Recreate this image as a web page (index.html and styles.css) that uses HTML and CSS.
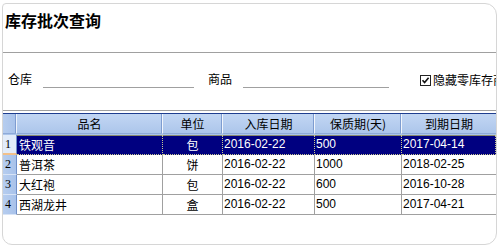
FILE: index.html
```html
<!DOCTYPE html>
<html lang="zh">
<head>
<meta charset="utf-8">
<title>库存批次查询</title>
<link rel="stylesheet" href="styles.css">
</head>
<body>
<div class="panel">
  <div class="title-bar"><h1 class="title">库存批次查询</h1></div>
  <div class="filters">
    <span class="label">仓库</span>
    <span class="field field-wh"></span>
    <span class="label label-goods">商品</span>
    <span class="field field-goods"></span>
    <label class="check">
      <svg class="check-box" width="11" height="11" viewBox="0 0 11 11"><rect x="0.5" y="0.5" width="10" height="10" fill="#fff" stroke="#222"/><path d="M2.5 5.2 L4.6 7.6 L8.6 2.8" fill="none" stroke="#111" stroke-width="1.6"/></svg>
      <span class="check-text">隐藏零库存商品</span>
    </label>
  </div>
  <div class="grid">
    <div class="row head">
      <div class="cell ind"></div>
      <div class="cell c1 center">品名</div>
      <div class="cell c2 center">单位</div>
      <div class="cell c3 center">入库日期</div>
      <div class="cell c4 center">保质期(天)</div>
      <div class="cell c5 center">到期日期</div>
    </div>
    <div class="row sel">
      <div class="cell ind cur">1</div>
      <div class="cell c1">铁观音</div>
      <div class="cell c2 center">包</div>
      <div class="cell c3 num">2016-02-22</div>
      <div class="cell c4 num">500</div>
      <div class="cell c5 num">2017-04-14</div>
    </div>
    <div class="row">
      <div class="cell ind">2</div>
      <div class="cell c1">普洱茶</div>
      <div class="cell c2 center">饼</div>
      <div class="cell c3 num">2016-02-22</div>
      <div class="cell c4 num">1000</div>
      <div class="cell c5 num">2018-02-25</div>
    </div>
    <div class="row">
      <div class="cell ind">3</div>
      <div class="cell c1">大红袍</div>
      <div class="cell c2 center">包</div>
      <div class="cell c3 num">2016-02-22</div>
      <div class="cell c4 num">600</div>
      <div class="cell c5 num">2016-10-28</div>
    </div>
    <div class="row">
      <div class="cell ind">4</div>
      <div class="cell c1">西湖龙井</div>
      <div class="cell c2 center">盒</div>
      <div class="cell c3 num">2016-02-22</div>
      <div class="cell c4 num">500</div>
      <div class="cell c5 num">2017-04-21</div>
    </div>
  </div>
</div>
</body>
</html>
```
FILE: styles.css
```css
html, body {
  margin: 0;
  padding: 0;
  background: #ffffff;
}
body {
  width: 500px;
  height: 249px;
  overflow: hidden;
  font-family: "Noto Sans CJK SC", "Noto Sans", sans-serif;
  font-size: 12px;
  color: #000;
}
.panel {
  box-sizing: border-box;
  margin: 3px 0 0 2px;
  width: 495px;
  height: 242px;
  border: 1px solid #d6d6d6;
  border-radius: 4px 12px 12px 10px;
  overflow: hidden;
  display: flex;
  flex-direction: column;
}
.title-bar {
  box-sizing: border-box;
  height: 49px;
  border-bottom: 1px solid #a0a0a0;
  padding: 5px 0 0 2px;
  flex: none;
}
.title {
  margin: 0;
  font-size: 16px;
  font-weight: bold;
  line-height: 22px;
}
.filters {
  box-sizing: border-box;
  height: 58px;
  border-bottom: 1px solid #a0a0a0;
  display: flex;
  align-items: flex-start;
  padding: 17px 0 0 5px;
  white-space: nowrap;
  flex: none;
}
.filters > * {
  flex: none;
}
.label {
  line-height: 18px;
}
.field {
  box-sizing: border-box;
  height: 18px;
  border-bottom: 1px solid #a0a0a0;
}
.field-wh {
  width: 151px;
  margin-left: 11px;
}
.label-goods {
  margin-left: 14px;
}
.field-goods {
  width: 146px;
  margin-left: 11px;
}
.check {
  display: flex;
  align-items: center;
  margin-left: 31px;
  margin-top: 1px;
  line-height: 18px;
}
.check-box {
  display: block;
  margin-right: 2px;
  flex: none;
}
.grid {
  margin-top: 2px;
  display: flex;
  flex-direction: column;
}
.row {
  display: flex;
  height: 20px;
  flex: none;
}
.cell {
  box-sizing: border-box;
  height: 20px;
  border-right: 1px solid #a0a0a0;
  border-bottom: 1px solid #a0a0a0;
  line-height: 19px;
  padding: 0 2px;
  white-space: nowrap;
  overflow: hidden;
  flex: none;
}
.ind { width: 14px; }
.c1 { width: 146px; }
.c2 { width: 60px; }
.c3 { width: 92px; }
.c4 { width: 87px; }
.c5 { width: 94px; border-right: none; }
.center { text-align: center; }
.num {
  font-family: "Liberation Sans", Arial, sans-serif;
  font-size: 12px;
  padding-left: 1px;
}
.head {
  height: 21px;
  border-top: 1px solid #1e3d8f;
  background: linear-gradient(#c2d6f3, #aac4ea);
}
.head .cell {
  height: 20px;
  line-height: 19px;
  border-right: 1px solid #f2f6fc;
  box-shadow: inset -2px 0 0 -1px #7e9cd0;
  border-bottom: 1px solid #8eaad8;
  padding: 0;
}
.head .c5 { border-right: none; box-shadow: none; }
.ind {
  background: linear-gradient(90deg, #b6cdef, #a8c2ea);
  border-right: 1px solid #6f8fc8;
  border-bottom: 1px solid #d8e4f6;
  font-family: "Liberation Serif", "Times New Roman", serif;
  font-size: 12px;
  padding: 0 0 0 2px;
}
.head .ind {
  border-right: 1px solid #eef3fb;
}
.ind.cur {
  background: #e2ecfa;
  border-bottom: 2px solid #f2c08a;
  line-height: 18px;
}
.sel .cell:not(.ind) {
  background: #000080;
  color: #ffffff;
  border-right: 1px dotted #c8c890;
  border-bottom: 1px dotted #c8c890;
  box-shadow: inset 0 1px 0 0 #8a8a70;
}
.sel .c5 { border-right: none; }
```
